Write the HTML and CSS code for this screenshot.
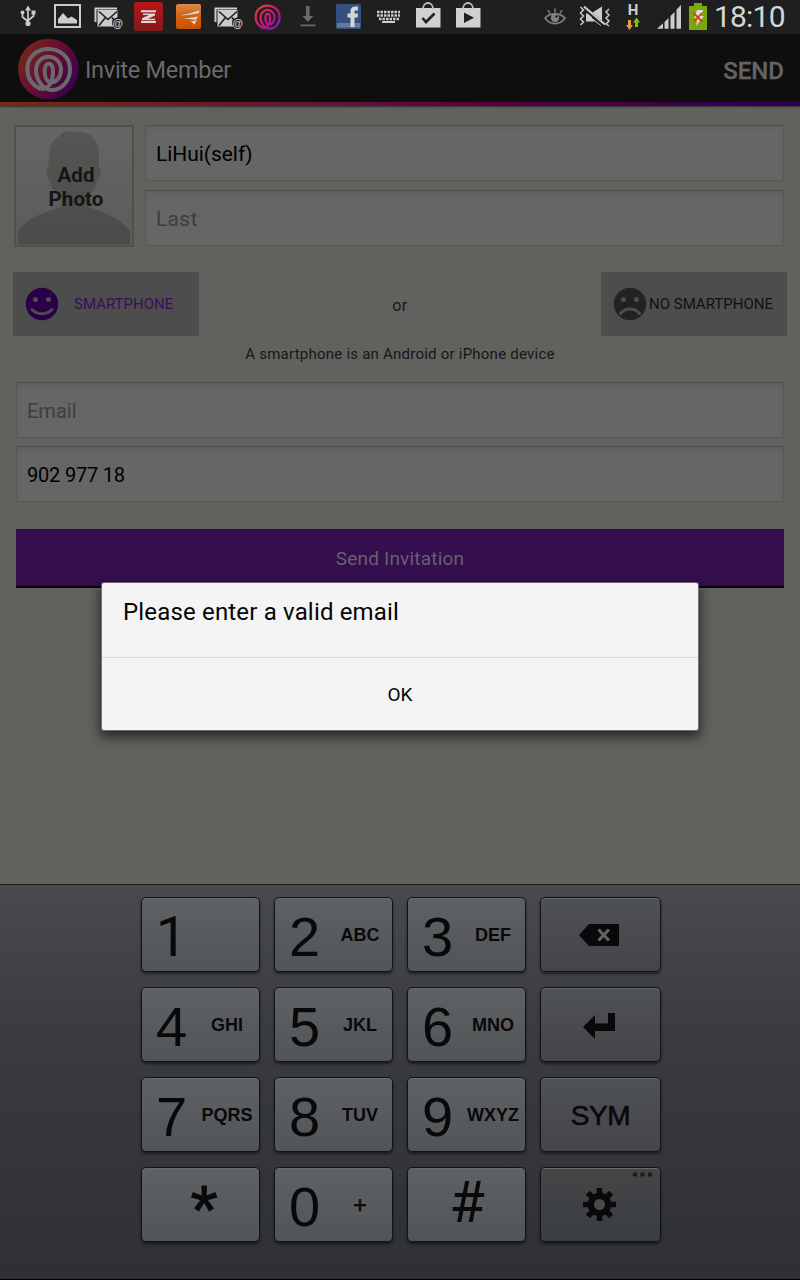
FILE: index.html
```html
<!DOCTYPE html>
<html lang="en">
<head>
<meta charset="utf-8">
<title>Invite Member</title>
<link rel="stylesheet" href="styles.css">
</head>
<body>
<svg class="defs" width="0" height="0">
  <defs>
    <linearGradient id="brand" x1="0" y1="0.2" x2="1" y2="0.8"><stop offset="0" stop-color="#752b12"/><stop offset=".45" stop-color="#680d36"/><stop offset="1" stop-color="#36004f"/></linearGradient>
    <linearGradient id="brandLine" x1="0" y1="0" x2="1" y2="1"><stop offset="0" stop-color="#d84630"/><stop offset=".5" stop-color="#d0147c"/><stop offset="1" stop-color="#6a20a8"/></linearGradient>
    <linearGradient id="red" x1="0" y1="0" x2="0" y2="1"><stop offset="0" stop-color="#b81418"/><stop offset="1" stop-color="#801c1c"/></linearGradient>
    <linearGradient id="orange" x1="0" y1="0" x2="0" y2="1"><stop offset="0" stop-color="#d88a48"/><stop offset=".5" stop-color="#d26010"/><stop offset="1" stop-color="#c85200"/></linearGradient>
    <linearGradient id="bust" x1="0" y1="0" x2="0" y2="1"><stop offset="0" stop-color="#555553"/><stop offset="1" stop-color="#4b4b49"/></linearGradient>
    <path id="spiral" d="M80 159C55 147 40 125 40 98C40 63 69 39 103 39C140 39 168 65 168 99C168 136 143 162 113 162C88 162 66 132 66 102C66 80 82 62 103 62C126 62 141 80 141 101C141 121 129 139 112 139C99 139 92 124 92 105C92 92 97 83 104 83C113 83 117 92 117 106C117 140 103 161 80 159"/>
    <g id="mail" transform="translate(4)">
      <path d="M3.500 22V8.500H25" fill="none" stroke="#ccc" stroke-width="2"/>
      <rect x="5.500" y="10" width="20" height="16.500" fill="#ccc"/>
      <path d="M7 11.500l9 8 9-8M7 25.500l6.500-8M26 25.500l-6-8" fill="none" stroke="#1f1f1f" stroke-width="1.600"/>
      <circle cx="25.500" cy="23" r="5.600" fill="#1f1f1f"/>
      <text x="25.500" y="26.500" text-anchor="middle" class="at">@</text>
    </g>
  </defs>
</svg>
<header class="status">
  <div class="notes">
    <svg viewBox="0 0 40 33"><g fill="none" stroke="#ccc" stroke-width="1.700"><path d="M20 9v15M14.500 13v4l5.500 4.500M25.500 13v3l-5.500 4.500"/></g><path d="M20 5.500l3 5h-6zM23.500 10.500h4v4h-4z" fill="#ccc"/><circle cx="14.500" cy="12.500" r="2" fill="#ccc"/><circle cx="20" cy="23.500" r="2.600" fill="#ccc"/></svg>
    <svg viewBox="0 0 40 33"><rect x="7" y="5" width="25" height="22" fill="none" stroke="#ccc" stroke-width="2"/><path d="M10 23.500v-4.500l5-6 5 5.500 3.500-2 5.500 3.500v3.500z" fill="#ccc"/></svg>
    <svg viewBox="0 0 40 33"><use href="#mail"/></svg>
    <svg viewBox="0 0 40 33"><rect x="6" y="2" width="29" height="29" rx="2.500" fill="url(#red)"/><path d="M13 11.200h15M13 22h15" stroke="#d8d8d8" stroke-width="2" fill="none"/><path d="M15 13.500h12v2l-7 3.200h7v1.600H14v-2l7-3.200h-6z" fill="#d8d8d8"/></svg>
    <svg viewBox="0 0 40 33"><rect x="8" y="4" width="25" height="25" rx="2" fill="url(#orange)"/><path d="M12 15.500c6-1 13-2.500 19.500-5.200l-1 3c-6 1.200-12 2-18.500 2.200zM14 18.500c6-.2 11-.8 16-2l-2 3.200c-4-.4-9-.8-14-1.200zM22 21.500c3-.2 5-.8 7-1.500l-3 5c-.5-1.800-1.800-2.800-4-3.500z" fill="#ddd"/></svg>
    <svg viewBox="0 0 40 33"><use href="#mail"/></svg>
    <svg viewBox="0 0 40 33"><g transform="translate(.2 -1.600) scale(.187)" fill="none" stroke="url(#brandLine)" stroke-width="12"><use href="#spiral"/></g></svg>
    <svg viewBox="0 0 40 33"><path d="M18 6h3.600v10h3.700l-5.500 6-5.500-6H18zM12.500 24.500h15v1.700h-15z" fill="#696969"/></svg>
    <svg viewBox="0 0 40 33"><rect x="8" y="4" width="25" height="25" rx="1.500" fill="#34507f"/><path d="M9 23h23v4.500H9z" fill="#667a9f"/><path d="M22.500 27V17.500h-3v-4h3v-2.500c0-3 1.800-4.500 4.500-4.500h3v4h-2c-1 0-1.500.5-1.500 1.500v1.500h3.500l-.5 4h-3V27z" fill="#d6d6d6"/></svg>
    <svg viewBox="0 0 40 33"><path d="M9 12h23M9 15.500h23M11 19h20" fill="none" stroke="#ccc" stroke-width="2.500" stroke-dasharray="2.500 1"/><path d="M14 21h13v2H14z" fill="#ccc"/></svg>
    <svg viewBox="0 0 40 33"><path d="M8 8h24.500v19.500H8z" fill="#d0d0d0"/><path d="M15 9c0-8 10-8 10 0" fill="none" stroke="#bbb" stroke-width="1.800"/><path d="M14.500 18l3.500 4 8.500-8.500" fill="none" stroke="#1f1f1f" stroke-width="2.600"/></svg>
    <svg viewBox="0 0 40 33"><path d="M8 8h24.500v19.500H8z" fill="#d0d0d0"/><path d="M15 9c0-8 10-8 10 0" fill="none" stroke="#bbb" stroke-width="1.800"/><path d="M16 12.500l10 5.200-10 5.200z" fill="#1f1f1f"/></svg>
  </div>
  <div class="system">
    <svg class="sys" width="168" height="33" viewBox="542 0 168 33">
      <path d="M545 18c5-5.500 15-5.500 20 0c-5 7.500-15 7.500-20 0z" fill="none" stroke="#808080" stroke-width="1.600"/><circle cx="555" cy="18" r="4.200" fill="#808080"/><path d="M555 8.500v4M548 10l2 3.500M562 10l-2 3.500" stroke="#808080" stroke-width="1.500"/><circle cx="556.500" cy="16.500" r="1.200" fill="#1f1f1f"/>
      <path d="M586 13.500h5l11-7v15l-4-2.500-6-4.500v3.500l9 7v1l-8-6h-7z" fill="#ccc"/><path d="M583 7l20 17" stroke="#1f1f1f" stroke-width="4"/><path d="M584 6.500l21 18" stroke="#ccc" stroke-width="2.200"/><path d="M586 13.500l9 8h-9z" fill="#ccc"/>
      <path d="M580.500 7l3 3-3 3 3 3-3 3 3 3-3 3M609 9l-3 3 3 3-3 3 3 3-3 3 3 2" fill="none" stroke="#ccc" stroke-width="1.500"/>
      <text x="633" y="15" text-anchor="middle" class="net">H</text>
      <path d="M628 20h3v5h2l-3.500 5-3.500-5h2z" fill="#e09a40"/><path d="M635 27v-4.500h-2l3.500-5 3.500 5h-2V27z" fill="#7cc010"/>
      <path d="M657 28.800l6-5.500v5.500zM664.500 28.800v-6.800l4-4v10.800zM670.500 28.800V16l4-4v16.800zM676.500 28.800V9.500l4.500-4.500v23.800z" fill="#ccc"/>
      <path d="M689 6h5V3h8v3h5v24h-18z" fill="#7aa80a"/><path d="M697 10h6l-2 6h3l-8 10 1.500-8H694z" fill="#ddd"/><path d="M693.500 13l9 9M702 13l-8.500 9" stroke="#e03818" stroke-width="1.800"/>
    </svg>
    <span class="clock">18:10</span>
  </div>
</header>
<div class="bar">
  <svg class="logo" width="70" height="66" viewBox="0 0 210 198"><circle cx="103" cy="99" r="91" fill="url(#brand)"/><use href="#spiral" fill="none" stroke="#6a6a6a" stroke-width="12"/></svg>
  <h1 class="title">Invite Member</h1>
  <span class="send">SEND</span>
</div>
<div class="stripe"></div>
<main class="form">
  <div class="name">
    <div class="photo">
      <svg width="120" height="122" viewBox="0 0 120 122"><path d="M4 106C12 93 32 87 47 82V73C39 68 36 60 36 55C32 53 32 45 34 43L36 23C37 17 42 12 46 11C49 5 57 6 66 7C78 7 85 17 85 27V43C88 45 87 53 83 54C82 62 79 68 74 72V82C91 87 107 94 116 106V119H4z" fill="url(#bust)"/></svg>
      <div class="photo-label">Add<br>Photo</div>
    </div>
    <div class="fields">
      <div class="field first">LiHui(self)</div>
      <div class="field hint last">Last</div>
    </div>
  </div>
  <div class="choice">
    <div class="phone on"><svg width="34" height="34" viewBox="0 0 34 34"><circle cx="17" cy="17" r="16.200" fill="#2a0048"/><g fill="#4d4d4d"><circle cx="10.500" cy="12.500" r="2.500"/><circle cx="23.500" cy="12.500" r="2.500"/></g><path d="M7 22.500c5 5.500 15 5.500 20 0" fill="none" stroke="#4d4d4d" stroke-width="3" stroke-linecap="round"/></svg><span class="phone-label">SMARTPHONE</span></div>
    <span class="or">or</span>
    <div class="phone"><svg width="34" height="34" viewBox="0 0 34 34"><circle cx="17" cy="17" r="16.200" fill="#222"/><g fill="#4d4d4d"><circle cx="10.500" cy="12.500" r="2.500"/><circle cx="23.500" cy="12.500" r="2.500"/></g><path d="M7.500 26.500c5-6 14-6 19 0" fill="none" stroke="#4d4d4d" stroke-width="3" stroke-linecap="round"/></svg><span class="phone-label">NO SMARTPHONE</span></div>
  </div>
  <p class="note">A smartphone is an Android or iPhone device</p>
  <div class="contact">
    <div class="field hint">Email</div>
    <div class="field number">902 977 18</div>
  </div>
  <div class="invite">Send Invitation</div>
</main>
<section class="keyboard">
  <div class="keys">
    <div class="key"><b class="one">1</b></div>
    <div class="key"><b>2</b><i>ABC</i></div>
    <div class="key"><b>3</b><i>DEF</i></div>
    <div class="key fn"><svg width="121" height="75" viewBox="0 0 121 75"><path d="M39 38l10-11h30v22H49z" fill="#090909"/><path d="M58.500 32.500l10.500 11M69 32.500L58.500 43.500" stroke="#606266" stroke-width="3.200"/></svg></div>
    <div class="key"><b>4</b><i>GHI</i></div>
    <div class="key"><b>5</b><i>JKL</i></div>
    <div class="key"><b>6</b><i>MNO</i></div>
    <div class="key fn"><svg width="121" height="75" viewBox="0 0 121 75"><path d="M43 40l12-12v8.500h13V26h7v18H55v8z" fill="#090909"/></svg></div>
    <div class="key"><b>7</b><i>PQRS</i></div>
    <div class="key"><b>8</b><i>TUV</i></div>
    <div class="key"><b>9</b><i>WXYZ</i></div>
    <div class="key fn sym">SYM</div>
    <div class="key symbol star">*</div>
    <div class="key"><b>0</b><i class="plus">+</i></div>
    <div class="key symbol hash">#</div>
    <div class="key fn dark"><svg width="121" height="75" viewBox="0 0 121 75"><g transform="translate(59.500 37.500)" fill="#090909"><g id="teeth"><path d="M-2.800-16.500h5.600v33h-5.600zM-16.500-2.800h33v5.600h-33z"/></g><use href="#teeth" transform="rotate(45)"/><circle r="11.800"/><circle r="5.500" fill="#484a4c"/></g><g fill="#1c1c1d"><circle cx="95" cy="7.500" r="2.300"/><circle cx="102.500" cy="7.500" r="2.300"/><circle cx="110" cy="7.500" r="2.300"/></g></svg></div>
  </div>
</section>
<div class="dialog">
  <div class="message">Please enter a valid email</div>
  <div class="ok">OK</div>
</div>
</body>
</html>
```
FILE: styles.css
```css
* { box-sizing: border-box; }
body { margin: 0; width: 800px; height: 1280px; overflow: hidden; background: #61615e; font-family: Roboto, sans-serif; display: flex; flex-direction: column; position: relative; }
.defs { position: absolute; }
.status { height: 34px; flex: none; background: #1f1f1f; display: flex; justify-content: space-between; }
.notes { display: flex; padding-left: 8px; }
.notes svg { width: 40px; height: 33px; flex: none; }
.at { font: bold 11px "Liberation Sans", sans-serif; fill: #ccc; }
.net { font: bold 15px Roboto, sans-serif; fill: #d0d0d0; }
.system { display: flex; width: 258px; }
.sys { flex: none; }
.clock { font-size: 30px; line-height: 33px; color: #d6d6d6; padding-left: 4px; letter-spacing: -.8px; white-space: nowrap; }
.bar { height: 68px; flex: none; background: #0e0e0e; display: flex; align-items: flex-start; padding: 0 16px 0 14px; }
.logo { margin-top: 2px; flex: none; }
.title { margin: 0 auto 0 1px; font-weight: 400; font-size: 23.500px; line-height: 72px; letter-spacing: -.28px; color: #6a6a6a; }
.send { font-weight: 500; font-size: 24px; line-height: 74px; color: #646464; -webkit-text-stroke: .3px #646464; }
.stripe { height: 4px; flex: none; background: linear-gradient(90deg, #752b12, #61103a 45%, #58003e 62%, #2b0050); box-shadow: 0 1px 2px #333; }
.form { flex: 1; display: flex; flex-direction: column; padding: 19px 15px 0; }
.name { display: flex; gap: 11px; margin: 0 1px 0 -1px; height: 122px; }
.photo { width: 120px; flex: none; display: grid; background: linear-gradient(#656565, #5b5b5a); border: 2px solid #50504e; }
.photo svg { grid-area: 1 / 1; margin: -2px; }
.photo-label { grid-area: 1 / 1; padding: 36px 0 0 4px; text-align: center; font-weight: 700; font-size: 20.500px; line-height: 24px; letter-spacing: .1px; color: #151515; }
.fields { flex: 1; display: flex; flex-direction: column; gap: 9px; }
.field { height: 56px; flex: none; background: #666; border: 1px solid #575755; border-top-color: #4e4e4c; box-shadow: inset 0 2px 4px #606060; padding-left: 10px; font-size: 20px; line-height: 56px; color: #000; }
.hint { color: #3e3e3e; }
.first { font-size: 21px; letter-spacing: -.05px; }
.last { font-size: 21px; letter-spacing: .3px; }
.number { letter-spacing: -.2px; }
.choice { display: flex; justify-content: space-between; margin: 25px -2px 0; height: 64px; }
.phone { width: 186px; background: #4d4d4d; display: flex; align-items: center; padding-left: 12px; font-size: 15px; color: #111; }
.phone-label { margin-left: 2px; white-space: nowrap; }
.on .phone-label { margin-left: 15px; color: #35105a; }
.or { font-size: 16px; line-height: 67px; letter-spacing: .5px; color: #171717; }
.note { margin: 9px 0 0; text-align: center; font-size: 15px; line-height: 18px; letter-spacing: .23px; color: #171717; }
.contact { display: flex; flex-direction: column; gap: 8px; margin: 19px 1px 0; }
.invite { margin: 27px 1px 0; height: 59px; flex: none; background: #350e50; border-bottom: 2px solid #050505; text-align: center; font-size: 19px; line-height: 59px; letter-spacing: .2px; color: #68606c; }
.keyboard { height: 396px; flex: none; background: linear-gradient(#494a4e, #3a3b3e 40%, #2f3034); border-top: 1px solid #1d1d20; border-bottom: 1px solid #000; padding: 12px 0 0 141px; }
.keys { display: grid; grid-template-columns: 119px 119px 119px 121px; grid-auto-rows: 75px; gap: 15px 14px; }
.key { border: 1px solid #121314; border-radius: 5px; background: linear-gradient(#5f6265, #525558); box-shadow: 0 2px 3px rgba(0,0,0,.5), inset 0 1px #666a6d; display: grid; grid-template-columns: 59px 52px; color: #090909; font-family: "Liberation Sans", sans-serif; }
.key b { font-weight: 400; font-size: 56px; line-height: 77px; text-align: center; }
.key .one { font-family: Roboto, sans-serif; line-height: 78px; }
.key i { font-style: normal; font-weight: 700; font-size: 18px; line-height: 75px; text-align: center; justify-self: center; }
.key .plus { font-weight: 400; font-size: 23px; -webkit-text-stroke: .6px #090909; }
.key.fn { display: block; background: linear-gradient(#4e5157, #454549); }
.key.fn svg { display: block; margin: -1px; }
.key.dark { background: linear-gradient(#444547, #3a3e41); }
.key.sym { font-size: 28px; line-height: 75px; text-align: center; letter-spacing: -.4px; -webkit-text-stroke: .6px #090909; }
.key.symbol { display: block; text-align: center; }
.key.star { font-size: 70px; line-height: 87px; padding-left: 7px; -webkit-text-stroke: 1px #090909; }
.key.hash { font-family: Roboto, sans-serif; font-size: 58px; line-height: 69px; padding-left: 1px; }
.dialog { position: absolute; left: 102px; top: 583px; width: 596px; height: 147px; border-radius: 2px; background: #f4f4f4; box-shadow: 0 0 0 1px rgba(150,150,150,.6), 0 5px 12px 2px rgba(0,0,0,.6); color: #050505; display: flex; flex-direction: column; }
.message { height: 75px; flex: none; padding-left: 21px; border-bottom: 1px solid #d8d8d8; font-size: 24px; line-height: 58px; letter-spacing: .17px; }
.ok { flex: none; height: 72px; text-align: center; font-size: 19px; line-height: 73px; }
```
